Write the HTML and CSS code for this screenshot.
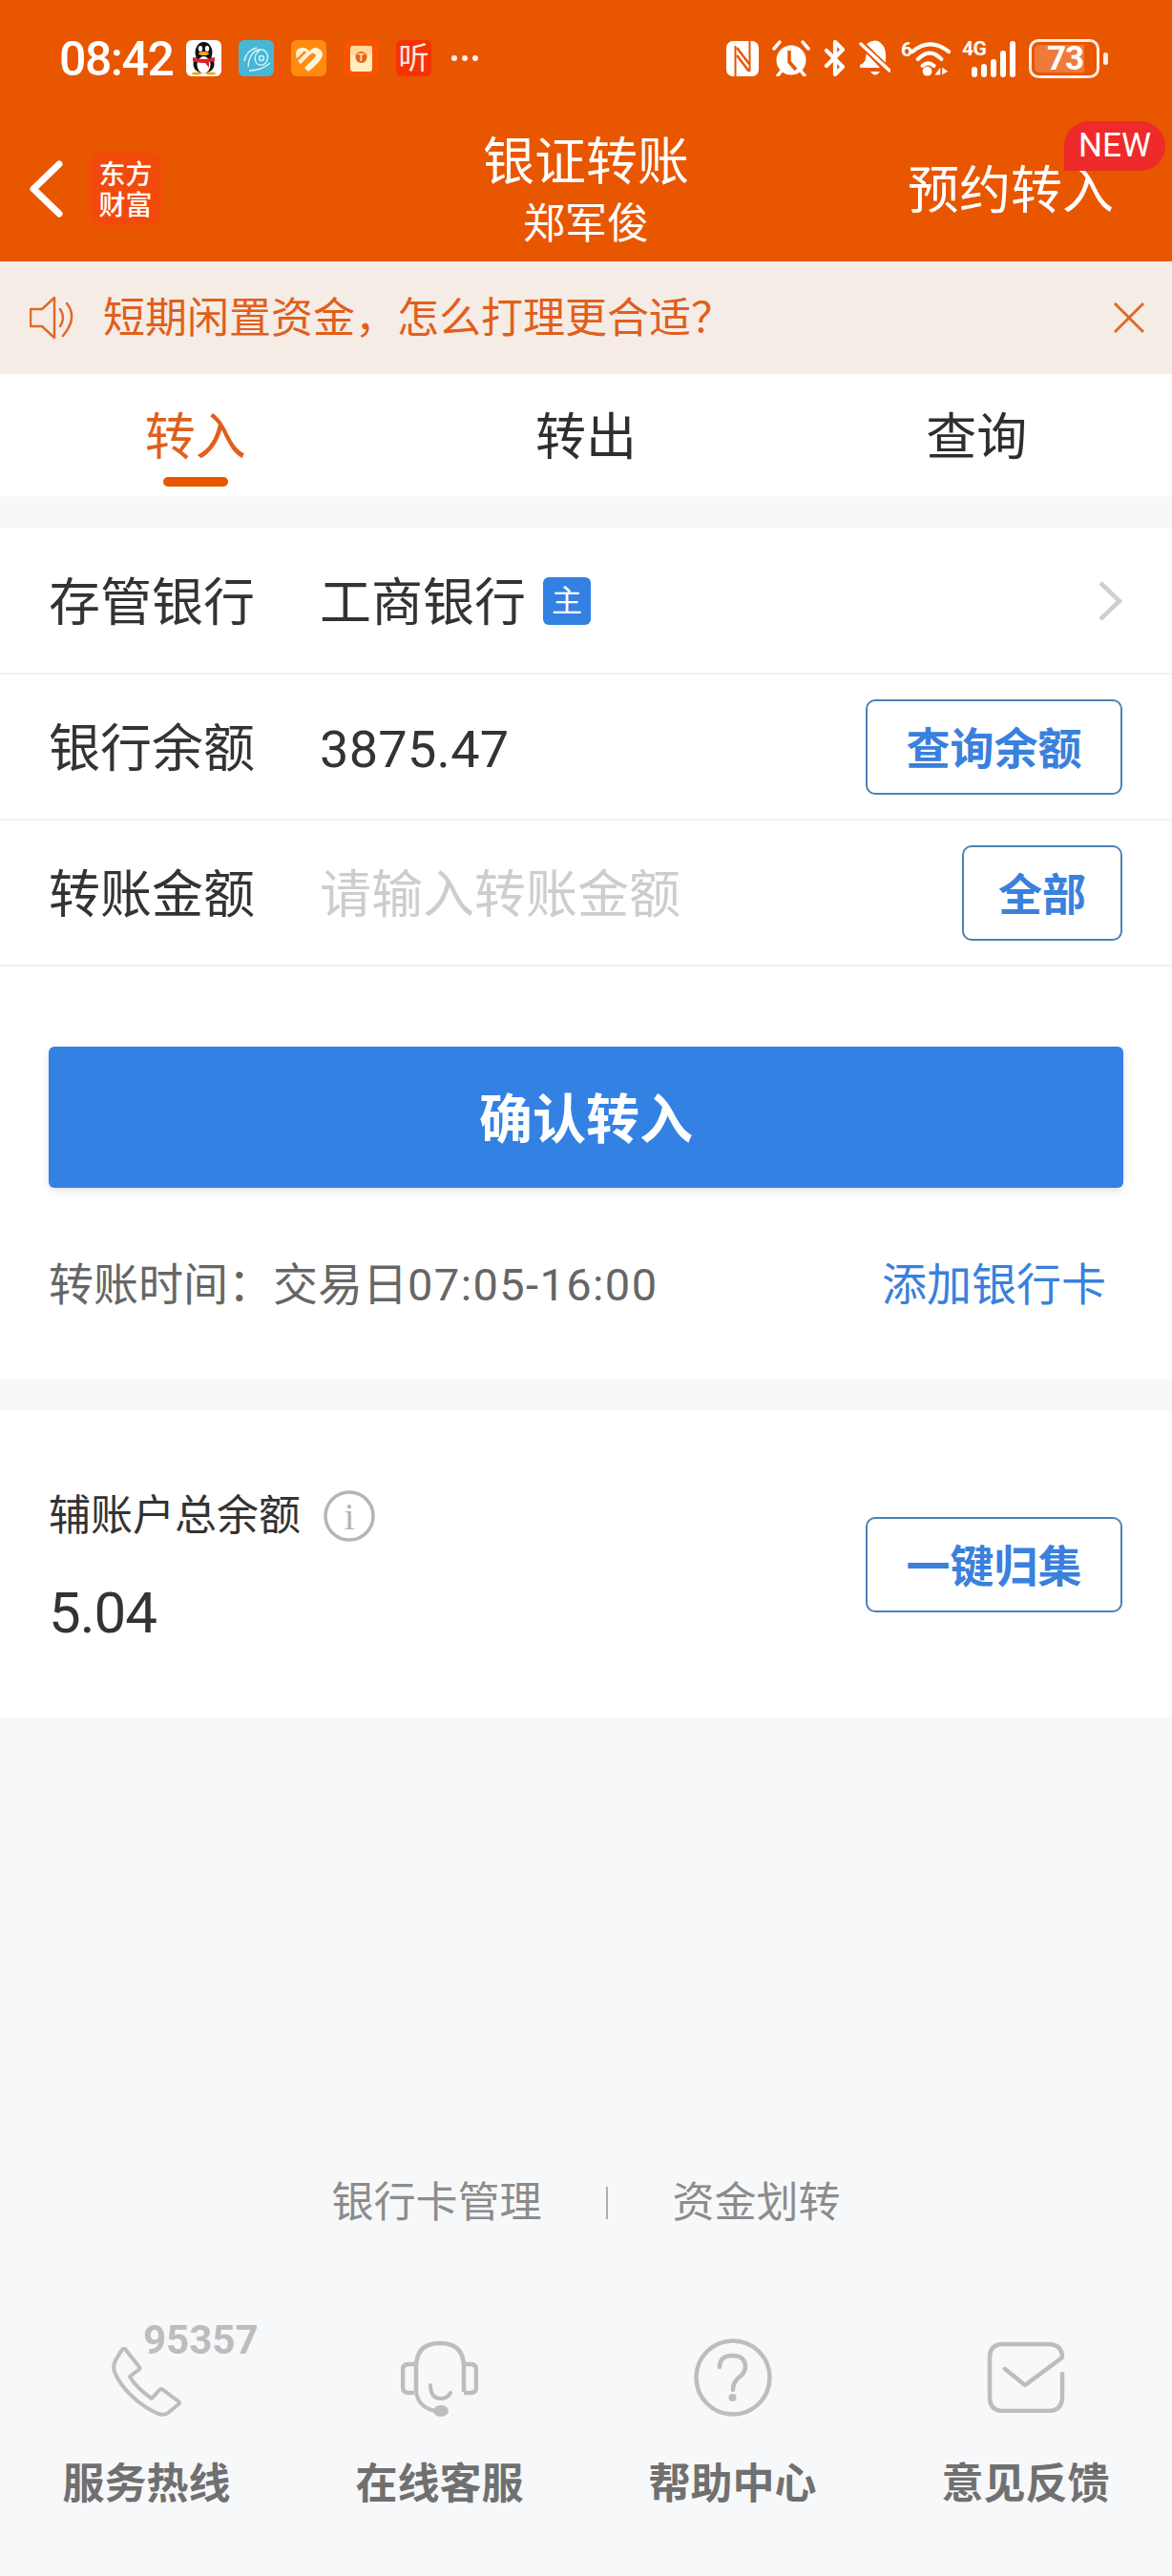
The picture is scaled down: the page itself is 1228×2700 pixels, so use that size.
FILE: index.html
```html
<!DOCTYPE html>
<html lang="zh-CN">

<head>
    <meta charset="UTF-8" />
    <title>银证转账</title>
    <link rel="stylesheet" href="styles.css">
</head>

<body>
    <div class="page">

        <header class="top">
            <div class="status">
                <span class="time">08:42</span>
                <div class="apps">
                    <svg class="app" viewBox="0 0 37 38">
                        <rect width="37" height="38" rx="6" fill="#fff" />
                        <ellipse cx="18.5" cy="13" rx="9" ry="11" fill="#111" />
                        <ellipse cx="18.5" cy="25" rx="11" ry="10" fill="#111" />
                        <ellipse cx="18.5" cy="26" rx="7" ry="9" fill="#fff" />
                        <ellipse cx="15" cy="9" rx="2.2" ry="3" fill="#fff" />
                        <ellipse cx="22" cy="9" rx="2.2" ry="3" fill="#fff" />
                        <ellipse cx="18.5" cy="14" rx="5.5" ry="2" fill="#f0a818" />
                        <path d="M7 18 Q18 22 30 18 L30 22 L24 23 L24 29 L20 24 Q12 24 7 22Z" fill="#d9232b" />
                        <ellipse cx="11" cy="35" rx="5" ry="1.6" fill="#f0a818" />
                        <ellipse cx="26" cy="35" rx="5" ry="1.6" fill="#f0a818" />
                    </svg>
                    <svg class="app" viewBox="0 0 37 38">
                        <rect width="37" height="38" rx="6" fill="#46b7d6" />
                        <g fill="none" stroke="#dff3f8" stroke-width="1.4">
                            <circle cx="24" cy="19" r="2.500" />
                            <path d="M6 22 Q8 11 19 8 M10 28 C10 20 14 12 21 10 C28 9 32 15 30 21 C28 27 21 28 18 23 C16 18 18 13 22 11" />
                            <path d="M11 32 Q24 32 33 24" />
                        </g>
                    </svg>
                    <svg class="app" viewBox="0 0 37 38">
                        <rect width="37" height="38" rx="6" fill="#ff8c0f" />
                        <path d="M5 15 Q5 8 12 8 Q17 8 19 12 Q22 8 26 8 Q33 9 33 16 Q32 22 18 33 L14 29 L25 18 Q27 15 24 14 Q22 13 20 15 L10 25 Q5 20 5 15Z" fill="#fff3d8" />
                        <path d="M6 21 L15 12" stroke="#ff8c0f" stroke-width="2.500" />
                    </svg>
                    <svg class="app" viewBox="0 0 37 38">
                        <rect width="37" height="38" rx="6" fill="#f95400" />
                        <rect x="7" y="6" width="23" height="27" rx="3" fill="#ffedbb" />
                        <path d="M7 9 Q7 6 10 6 H27 Q30 6 30 9 V14 Q19 23 7 14Z" fill="#ffd99c" />
                        <circle cx="18.500" cy="18" r="6" fill="#ee5f10" />
                        <text class="app-t" x="18.500" y="22">T</text>
                    </svg>
                    <span class="app app-ting">听</span>
                    <span class="more"><i></i><i></i><i></i></span>
                </div>

                <div class="sys">
                    <svg class="nfc" viewBox="0 0 34 37">
                        <rect width="34" height="37" rx="7" fill="#fff" />
                        <path d="M9.500 5 V37 M24.500 0 V32" stroke="#e85600" stroke-width="2" />
                        <path d="M11 7 L24 24 M11 15 L24 32" stroke="#e85600" stroke-width="2.500" />
                    </svg>
                    <svg class="alarm" viewBox="0 0 40 38">
                        <circle cx="20" cy="21" r="15.500" fill="#fff" />
                        <path d="M18 11 V23 L25 31" fill="none" stroke="#e85600" stroke-width="3.500" />
                        <path d="M2 9 L8 2 M38 9 L32 2 M6 37 L10 32 M34 37 L30 32" stroke="#fff" stroke-width="3.500" stroke-linecap="round" />
                    </svg>
                    <svg class="bt" viewBox="0 0 23 38">
                        <path d="M3 11 L20 28 L12 36 V2 L20 10 L3 27" fill="none" stroke="#fff" stroke-width="4.200" stroke-linejoin="round" stroke-linecap="round" />
                    </svg>
                    <svg class="bell" viewBox="0 0 33 38">
                        <path d="M8 4 Q14 -1 20 1 Q28 5 28 16 V25Z M8 14 L22 29 H1 V26 Q7 24 7 18Z" fill="#fff" />
                        <path d="M12 33 H22 Q17 40 12 33Z" fill="#fff" />
                        <path d="M2 4 L32 32" stroke="#e85600" stroke-width="7" />
                        <path d="M2 4 L32 32" stroke="#fff" stroke-width="3.500" stroke-linecap="round" />
                    </svg>
                    <div class="wifi">
                        <span class="wifi-six">6</span>
                        <svg viewBox="0 0 44 38">
                            <path d="M2 12 Q21 -4 41 12 M8 20 Q21 7 33 20 M13 27 Q19 22 25 27" fill="none" stroke="#fff" stroke-width="4.200" stroke-linecap="round" />
                            <circle cx="18" cy="33" r="5" fill="#fff" />
                            <path d="M26 37 L32 29 V37Z M34 29 L40 33 L34 37Z" fill="#fff" />
                        </svg>
                    </div>
                    <div class="signal">
                        <span class="signal-g">4G</span>
                        <span class="bar bar1"></span>
                        <span class="bar bar2"></span>
                        <span class="bar bar3"></span>
                        <span class="bar bar4"></span>
                        <span class="bar bar5"></span>
                    </div>
                    <div class="battery">
                        <div class="battery-box">
                            <span class="battery-fill">73</span>
                        </div>
                        <span class="battery-tip"></span>
                    </div>
                </div>
            </div>

            <nav class="navbar">
                <div class="nav-left">
                    <svg class="back" viewBox="0 0 36 60">
                        <path d="M32 4 L5 30 L32 56" fill="none" stroke="#fff" stroke-width="7" stroke-linecap="round" stroke-linejoin="round" />
                    </svg>
                    <div class="logo">东方<br>财富</div>
                </div>
                <div class="nav-title">
                    <h1>银证转账</h1>
                    <p>郑军俊</p>
                </div>
                <div class="nav-right">预约转入</div>
                <span class="new-tag">NEW</span>
            </nav>
        </header>

        <div class="notice">
            <svg class="speaker" viewBox="0 0 48 48">
                <path d="M1 15 H13 L26 3 V45 L13 33 H1Z" fill="none" stroke="#e0692c" stroke-width="2.500" stroke-linejoin="round" />
                <path d="M32 15 Q38 24 32 33 M39 9 Q51 24 35 43" fill="none" stroke="#e0692c" stroke-width="2.500" stroke-linecap="round" />
            </svg>
            <span class="notice-text">短期闲置资金，怎么打理更合适？</span>
            <svg class="close" viewBox="0 0 34 34">
                <path d="M2 2 L32 32 M32 2 L2 32" stroke="#e0692c" stroke-width="3" />
            </svg>
        </div>

        <div class="tabs">
            <div class="tab active"><span>转入</span><i></i></div>
            <div class="tab"><span>转出</span><i></i></div>
            <div class="tab"><span>查询</span><i></i></div>
        </div>

        <section class="form">
            <div class="row">
                <span class="row-label">存管银行</span>
                <span class="row-value">工商银行</span>
                <span class="main-tag">主</span>
                <svg class="chevron" viewBox="0 0 26 44">
                    <path d="M3 3 L23 22 L3 41" fill="none" stroke="#cfcfd3" stroke-width="4.500" />
                </svg>
            </div>
            <div class="row">
                <span class="row-label">银行余额</span>
                <span class="row-value num">3875.47</span>
                <button class="btn-line wide">查询余额</button>
            </div>
            <div class="row">
                <span class="row-label">转账金额</span>
                <span class="row-value hint">请输入转账金额</span>
                <button class="btn-line small">全部</button>
            </div>

            <button class="btn-confirm">确认转入</button>

            <div class="info-row">
                <span>转账时间：交易日<span class="info-time">07:05-16:00</span></span>
                <a class="add-card">添加银行卡</a>
            </div>
        </section>

        <section class="sub-account">
            <div class="sub-left">
                <div class="sub-title">
                    <span>辅账户总余额</span>
                    <svg class="info" viewBox="0 0 54 54">
                        <circle cx="27" cy="27" r="25" fill="none" stroke="#b5b5b5" stroke-width="3.500" />
                        <text class="info-i" x="27" y="41">i</text>
                    </svg>
                </div>
                <div class="sub-value">5.04</div>
            </div>
            <button class="btn-line wide sub-btn">一键归集</button>
        </section>

        <div class="links">
            <span>银行卡管理</span>
            <i></i>
            <span>资金划转</span>
        </div>

        <div class="tools">
            <div class="tool">
                <div class="tool-icon">
                    <div class="phone-wrap">
                        <span class="hotline">95357</span>
                        <svg class="phone" viewBox="0 0 73 73">
                            <path d="M14 2 L29 21 Q30 23 28 24 L19 31 Q25 42 42 54 L50 45 Q52 43 54 45 L70 57 Q72 59 70 60 L59 69 Q55 72 49 70 C30 62 10 44 3 26 Q1 20 4 14 L10 4 Q12 1 14 2Z" fill="none" stroke="#bdbdbd" stroke-width="4" stroke-linejoin="round" />
                        </svg>
                    </div>
                </div>
                <span class="tool-name">服务热线</span>
            </div>
            <div class="tool">
                <div class="tool-icon">
                    <svg class="headset" viewBox="0 0 81 80">
                        <path d="M16 54 V28 Q16 3 41 3 Q66 3 66 28 V54" fill="none" stroke="#bdbdbd" stroke-width="4.500" />
                        <path d="M14 25 H8 Q2 25 2 31 V49 Q2 55 8 55 H14 M66 25 H73 Q79 25 79 31 V49 Q79 55 73 55 H66" fill="none" stroke="#bdbdbd" stroke-width="4.500" />
                        <path d="M31 47 Q31 61 42 61 Q49 61 52 55" fill="none" stroke="#bdbdbd" stroke-width="4" stroke-linecap="round" />
                        <path d="M16 54 Q18 70 36 74" fill="none" stroke="#bdbdbd" stroke-width="4" />
                        <ellipse cx="42" cy="74" rx="8" ry="6" fill="#bdbdbd" />
                    </svg>
                </div>
                <span class="tool-name">在线客服</span>
            </div>
            <div class="tool">
                <div class="tool-icon">
                    <svg class="help" viewBox="0 0 82 82">
                        <circle cx="41" cy="41" r="38.500" fill="none" stroke="#bdbdbd" stroke-width="4.500" />
                        <path d="M27 30 Q27 18 40 18 Q54 18 54 30 Q54 36 47 41 Q41 46 41 54" fill="none" stroke="#bdbdbd" stroke-width="4.500" stroke-linecap="round" />
                        <circle cx="40.500" cy="62" r="4" fill="#bdbdbd" />
                    </svg>
                </div>
                <span class="tool-name">帮助中心</span>
            </div>
            <div class="tool">
                <div class="tool-icon">
                    <svg class="mail" viewBox="0 0 82 75">
                        <path d="M79 34 V58 Q79 73 64 73 H17 Q3 73 3 58 V17 Q3 3 17 3 H64 Q79 3 79 17 L40 46 L19 29" fill="none" stroke="#bdbdbd" stroke-width="4.500" stroke-linecap="round" stroke-linejoin="round" />
                    </svg>
                </div>
                <span class="tool-name">意见反馈</span>
            </div>
        </div>

    </div>
</body>

</html>
```

FILE: styles.css
```css
* {
    box-sizing: border-box;
    margin: 0;
    padding: 0;
}

body {
    background: #f7f8fa;
    color: #333;
    font-family: Roboto, "Noto Sans CJK SC", sans-serif;
}

.page {
    width: 1228px;
    height: 2700px;
    overflow: hidden;
}

/* header */
.top {
    background: #e85600;
    color: #fff;
    height: 274px;
}

.status {
    height: 122px;
    padding: 0 67px 0 62px;
    display: flex;
    align-items: center;
}

.time {
    font-size: 50px;
    font-weight: 500;
    line-height: 50px;
    letter-spacing: -1.5px;
    width: 133px;
    padding-top: 2px;
    flex: none;
}

.apps {
    display: flex;
    align-items: center;
    gap: 18px;
}

.app {
    width: 37px;
    height: 38px;
    display: block;
}

.app-t {
    font-size: 11px;
    font-weight: 700;
    fill: #ffe9c8;
    text-anchor: middle;
}

.app-ting {
    background: #f53305;
    border-radius: 6px;
    font-size: 32px;
    line-height: 38px;
    text-align: center;
    color: #ffe8e0;
}

.more {
    display: flex;
    gap: 5px;
    margin-left: 3px;
}

.more i {
    width: 6px;
    height: 6px;
    border-radius: 50%;
    background: #fdf0e8;
}

.sys {
    margin-left: auto;
    display: flex;
    align-items: center;
    gap: 14px;
}

.nfc {
    width: 34px;
    height: 37px;
}

.alarm {
    width: 40px;
    height: 38px;
}

.bt {
    width: 23px;
    height: 38px;
}

.bell {
    width: 33px;
    height: 38px;
}

.wifi {
    display: flex;
    width: 53px;
    height: 40px;
    margin-left: -3px;
}

.wifi-six {
    font-size: 21px;
    font-weight: 700;
    line-height: 22px;
    width: 9px;
    margin-right: 1px;
}

.wifi svg {
    width: 43px;
    height: 40px;
}

.signal {
    position: relative;
    width: 56px;
    height: 40px;
    margin-left: -3px;
    display: flex;
    align-items: flex-end;
    justify-content: flex-end;
    gap: 4px;
}

.signal-g {
    position: absolute;
    left: 0;
    top: 0;
    font-size: 21px;
    font-weight: 700;
    line-height: 20px;
    letter-spacing: -0.5px;
}

.bar {
    width: 6px;
    background: #fff;
    border-radius: 3px;
}

.bar1 {
    height: 11px;
}

.bar2 {
    height: 14px;
}

.bar3 {
    height: 19px;
}

.bar4 {
    height: 28px;
}

.bar5 {
    height: 38px;
}

.battery {
    display: flex;
    align-items: center;
    gap: 4px;
}

.battery-box {
    width: 74px;
    height: 41px;
    border: 3px solid #fdeee6;
    border-radius: 10px;
    padding: 3px;
}

.battery-fill {
    display: block;
    width: 52px;
    height: 29px;
    background: #ee7a3c;
    border-radius: 5px 0 0 5px;
    font-size: 35px;
    font-weight: 700;
    line-height: 29px;
    padding-left: 13px;
    letter-spacing: -1px;
    white-space: nowrap;
}

.battery-tip {
    width: 5px;
    height: 13px;
    background: #fdeee6;
    border-radius: 3px;
}

.navbar {
    position: relative;
    height: 152px;
    display: grid;
    grid-template-columns: 1fr auto 1fr;
    align-items: center;
}

.nav-left {
    display: flex;
    align-items: center;
    gap: 28px;
    padding-left: 30px;
}

.back {
    width: 36px;
    height: 60px;
}

.logo {
    width: 75px;
    height: 76px;
    background: #f24a0c;
    border-radius: 14px;
    font-size: 28px;
    font-weight: 500;
    line-height: 32px;
    text-align: center;
    padding-top: 8px;
}

.nav-title {
    text-align: center;
    padding-top: 10px;
}

.nav-title h1 {
    font-size: 54px;
    font-weight: 400;
    line-height: 65px;
}

.nav-title p {
    font-size: 44px;
    line-height: 65px;
}

.nav-right {
    text-align: right;
    padding: 6px 61px 0 0;
    font-size: 54px;
    line-height: 60px;
}

.new-tag {
    position: absolute;
    top: 5px;
    right: 7px;
    width: 106px;
    height: 52px;
    background: #ee2a2a;
    border-radius: 26px 26px 26px 0;
    font-size: 35px;
    line-height: 52px;
    text-align: center;
}

/* notice bar */
.notice {
    height: 118px;
    background: #f5ece6;
    display: flex;
    align-items: center;
    padding: 0 28px 0 31px;
    color: #e05f1c;
}

.speaker {
    width: 48px;
    height: 48px;
    margin-right: 29px;
}

.notice-text {
    font-size: 44px;
    line-height: 60px;
    padding-top: 2px;
}

.close {
    width: 34px;
    height: 34px;
    margin-left: auto;
}

/* tabs */
.tabs {
    height: 128px;
    background: #fff;
    display: grid;
    grid-template-columns: repeat(3, 1fr);
}

.tab {
    display: flex;
    flex-direction: column;
    align-items: center;
    padding-top: 35px;
    font-size: 53px;
    line-height: 64px;
    color: #2e2e2e;
}

.tab i {
    width: 68px;
    height: 10px;
    margin-top: 9px;
    border-radius: 5px;
}

.tab.active {
    color: #e05f1c;
}

.tab.active i {
    background: #e85600;
}

/* form */
.form {
    margin-top: 34px;
    background: #fff;
    height: 891px;
}

.row {
    height: 153px;
    display: flex;
    align-items: center;
    padding: 0 52px 0 51px;
    border-bottom: 2px solid #f1f1f3;
    font-size: 54px;
    line-height: 64px;
}

.row-label {
    width: 284px;
    flex: none;
    margin-top: 6px;
}

.row-value {
    margin-top: 6px;
}

.row-value.num {
    letter-spacing: 0.3px;
}

.row-value.hint {
    color: #cdcdcd;
}

.main-tag {
    width: 50px;
    height: 50px;
    margin-left: 18px;
    background: #3381e3;
    border-radius: 6px;
    color: #fff;
    font-size: 32px;
    line-height: 50px;
    text-align: center;
}

.chevron {
    width: 26px;
    height: 44px;
    margin-left: auto;
}

.btn-line {
    margin-left: auto;
    height: 100px;
    padding-bottom: 4px;
    background: #fff;
    border: 2px solid #4a82b8;
    border-radius: 10px;
    color: #3a80dc;
    font-family: inherit;
    font-size: 46px;
    font-weight: 700;
}

.btn-line.wide {
    width: 269px;
}

.btn-line.small {
    width: 168px;
}

.btn-confirm {
    display: block;
    width: 1126px;
    height: 148px;
    margin: 84px auto 0;
    padding-bottom: 6px;
    background: #3381e3;
    border: none;
    border-radius: 6px;
    box-shadow: 0 3px 8px rgba(0, 0, 0, 0.12);
    color: #fff;
    font-family: inherit;
    font-size: 56px;
    font-weight: 700;
}

.info-row {
    display: flex;
    justify-content: space-between;
    padding: 72px 69px 0 51px;
    font-size: 47px;
    line-height: 60px;
    color: #666;
}

.info-time {
    letter-spacing: 1.4px;
}

.add-card {
    color: #3a80dc;
}

/* sub account */
.sub-account {
    margin-top: 34px;
    height: 321px;
    background: #fff;
    display: flex;
    align-items: flex-start;
    padding: 83px 52px 0 51px;
}

.sub-title {
    display: flex;
    align-items: center;
    gap: 24px;
    font-size: 44px;
    line-height: 54px;
    color: #333;
}

.info {
    width: 54px;
    height: 54px;
}

.info-i {
    font-family: "Liberation Serif", serif;
    font-size: 40px;
    fill: #b5b5b5;
    text-anchor: middle;
}

.sub-value {
    margin-top: 45px;
    font-size: 60px;
    line-height: 60px;
    letter-spacing: -1px;
}

.sub-btn {
    margin-top: 28px;
}

/* bottom links */
.links {
    margin-top: 479px;
    height: 60px;
    display: flex;
    align-items: center;
    justify-content: center;
    font-size: 44px;
    line-height: 60px;
    color: #8c8c8c;
}

.links i {
    width: 2px;
    height: 34px;
    margin: 0 68px 0 67px;
    background: #b0b0b0;
}

.tools {
    margin-top: 98px;
    display: grid;
    grid-template-columns: repeat(4, 307px);
}

.tool {
    display: flex;
    flex-direction: column;
    align-items: center;
}

.tool-icon {
    height: 96px;
    display: flex;
    align-items: flex-end;
    justify-content: center;
}

.tool-name {
    margin-top: 41px;
    font-size: 44px;
    font-weight: 700;
    line-height: 60px;
    color: #707070;
}

.phone-wrap {
    position: relative;
    height: 73px;
}

.phone {
    width: 73px;
    height: 73px;
    display: block;
}

.hotline {
    position: absolute;
    left: 33px;
    top: -25px;
    font-size: 42px;
    font-weight: 700;
    line-height: 36px;
    color: #bdbdbd;
}

.headset {
    width: 81px;
    height: 80px;
}

.help {
    width: 82px;
    height: 82px;
}

.mail {
    width: 82px;
    height: 75px;
    margin-bottom: 4px;
}
```
